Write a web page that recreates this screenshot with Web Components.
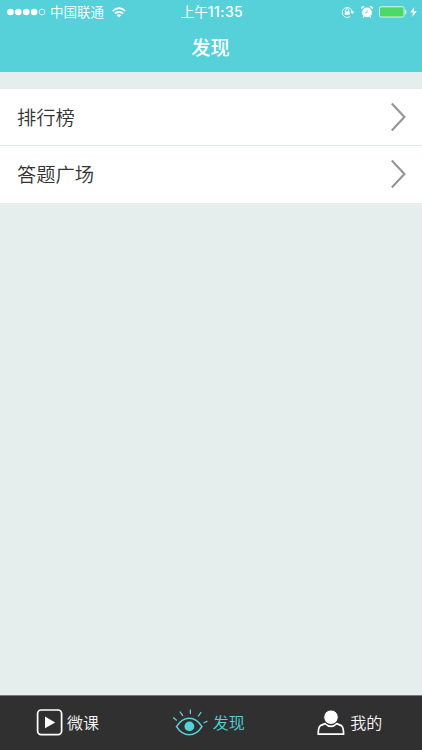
<!DOCTYPE html>
<html lang="zh-CN">
<head>
<meta charset="utf-8">
<title>发现</title>
<style>
html,body{margin:0;height:100%}
body{font-family:"Liberation Sans","Noto Sans CJK SC",sans-serif;overflow:hidden}
</style>
</head>
<body>
<discover-app></discover-app>
<script>
const define=(name,html)=>customElements.define(name,class extends HTMLElement{
  constructor(){
    super();
    const t=document.createElement('template');
    t.innerHTML=html;
    this.attachShadow({mode:'open'}).append(t.content.cloneNode(true));
  }
});

define('status-bar',`<style>
:host{display:grid;grid-template-columns:1fr auto 1fr;height:24px;align-items:center;color:#fff;font:350 13.5px/24px Inter,"Noto Sans CJK SC",sans-serif}
.l,.r{display:flex;align-items:center}
.l{padding-left:7px}
.r{justify-content:flex-end;padding-right:5px}
svg{display:block;flex:none}
.dots{margin-right:4px}.wifi{margin-left:8px}
.t{display:flex;font-weight:400;padding-left:2px}
.t b{font-weight:500;font-size:14px;letter-spacing:.4px}
</style>
<div class="l">
<svg class="dots" width="39" height="10" viewBox="0 0 39 10" fill="#fff"><circle cx="3.5" cy="5" r="3.3"/><circle cx="11.3" cy="5" r="3.3"/><circle cx="19.2" cy="5" r="3.3"/><circle cx="27.1" cy="5" r="3.3"/><circle cx="35" cy="5" r="2.9" fill="none" stroke="#fff" stroke-width=".7"/></svg>
<span>中国联通</span>
<svg class="wifi" width="14" height="11" viewBox="0 0 14 11" fill="none" stroke="#fff" stroke-width="1.7"><path d="M.7 4.1Q7-1.8 13.3 4.1M3 6.6Q7 2.9 11 6.6"/><path d="M4.7 8.2Q7 6.2 9.3 8.2L7 10.6Z" fill="#fff" stroke="none"/></svg>
</div>
<div class="t"><span>上午</span><b>11:35</b></div>
<div class="r">
<svg width="14" height="13" viewBox="0 0 14 13" fill="none" stroke="#fff"><path d="M9.3 10.4A5 5 0 1 1 11.2 6" stroke-width=".9"/><path d="M9.2 5.6h4.2l-2.1 2.4z" fill="#fff" stroke="none"/><path d="M4.7 5.6V4.2a1.5 1.5 0 0 1 3 0V5.6" stroke-width=".9"/><rect x="3.8" y="5.2" width="4.8" height="3.5" fill="#fff" stroke="none"/></svg>
<svg style="margin-left:6px" width="12" height="13" viewBox="0 0 12 13" fill="#fff"><circle cx="6" cy="6.4" r="4.9"/><path d="M.3 3.5A2.1 2.1 0 0 1 3.5.8zM11.7 3.5A2.1 2.1 0 0 0 8.5.8zM1.6 11.3l1.2-1.6 1 .9-1 1.1zM10.4 11.3l-1.2-1.6-1 .9 1 1.1z"/><path d="M6 3.8v2.9H4" fill="none" stroke="#56d1d9" stroke-width=".8"/></svg>
<svg style="margin-left:6px" width="28" height="12" viewBox="0 0 28 12"><rect x=".5" y=".8" width="24.5" height="10.2" rx="1.5" fill="#4cda64" stroke="#d7f5ef"/><path d="M26 4q1.5.2 1.5 2T26 8z" fill="#fff"/></svg>
<svg style="margin-left:3px" width="7" height="10" viewBox="0 0 7 10"><path d="M4.3 0L.2 5.5H3L2.2 10 6.8 4.2H3.9z" fill="#fff"/></svg>
</div>`);

define('nav-header',`<style>
:host{display:flex;flex-direction:column;height:72px;background:#56d1d9;flex:none}
h1{margin:0;padding-right:1px;text-align:center;font:500 19.2px/46px "Noto Sans CJK SC",sans-serif;color:#fff}
</style><status-bar></status-bar><h1><slot></slot></h1>`);

define('list-row',`<style>
:host{display:flex;align-items:center;justify-content:space-between;height:57px;box-sizing:border-box;padding:0 16px 1px 17px;background:#fff;color:#333;font:350 19.3px/56px "Noto Sans CJK SC",sans-serif}
:host([divided]){padding-bottom:0;border-bottom:1px solid #e5eaed}
svg{display:block}
</style><span><slot></slot></span>
<svg width="15" height="30" viewBox="0 0 15 30"><path d="M.8 1.5L13.4 15L.8 28.5" fill="none" stroke="#979797" stroke-width="2.2"/></svg>`);

define('tab-item',`<style>
:host{display:flex;align-items:center;color:#f7f7f7;font:350 16px/24px "Noto Sans CJK SC",sans-serif}
:host([active]){color:#56d1d9}
::slotted(svg){display:block;flex:none}
</style><slot name="icon"></slot><span><slot></slot></span>`);

define('tab-bar',`<style>
:host{display:grid;grid-template-columns:repeat(3,1fr);height:55px;box-sizing:border-box;background:#303030;border-top:1px solid #777;padding-bottom:2px;flex:none}
tab-item{padding-left:36px}
tab-item:nth-of-type(2){padding-left:31px}
svg{margin-right:4px}
tab-item:last-of-type svg{margin-right:5px}
</style>
<tab-item><svg slot="icon" width="27" height="28" viewBox="0 0 27 28"><rect x="1.6" y="2" width="24" height="24.6" rx="3.6" fill="none" stroke="#fff" stroke-width="1.7"/><path d="M9 8.6L19.2 14.4L9 20.2z" fill="#fff"/></svg>微课</tab-item>
<tab-item active><svg slot="icon" width="37" height="28" viewBox="0 0 37 28" fill="none" stroke="#56d1d9" stroke-width="1.3"><path d="M4.5 18.6C11.5 7.5 23 7.5 30 18.6C23 29.5 11.5 29.5 4.5 18.6Z" stroke-width="1.6"/><circle cx="17.4" cy="18.4" r="4.9" fill="#56d1d9" stroke="none"/><path d="M18.4 1.4v4.6M7.9 3.6l3 4.2M1.2 9.5l3.6 3.1M29.2 4.2l-3 4.1M35.4 13.2l-3.9 1.8"/></svg>发现</tab-item>
<tab-item><svg slot="icon" width="28" height="28" viewBox="0 0 28 28"><path d="M8.2 15.6L3.4 17.6Q1.2 19.4 1.2 26.2H26.6Q26.6 19.4 24.4 17.6L19.6 15.6Q14 21.2 8.2 15.6Z" fill="none" stroke="#fff" stroke-width="1.7" stroke-linejoin="round"/><circle cx="14" cy="9.2" r="7.3" fill="#fff" stroke="#303030" stroke-width="1"/></svg>我的</tab-item>`);

define('discover-app',`<style>
:host{display:flex;flex-direction:column;height:100vh;background:#e5eeed}
main{flex:1;padding-top:17px;box-sizing:border-box}
</style>
<nav-header>发现</nav-header>
<main><list-row divided>排行榜</list-row><list-row>答题广场</list-row></main>
<tab-bar></tab-bar>`);
</script>
</body>
</html>
